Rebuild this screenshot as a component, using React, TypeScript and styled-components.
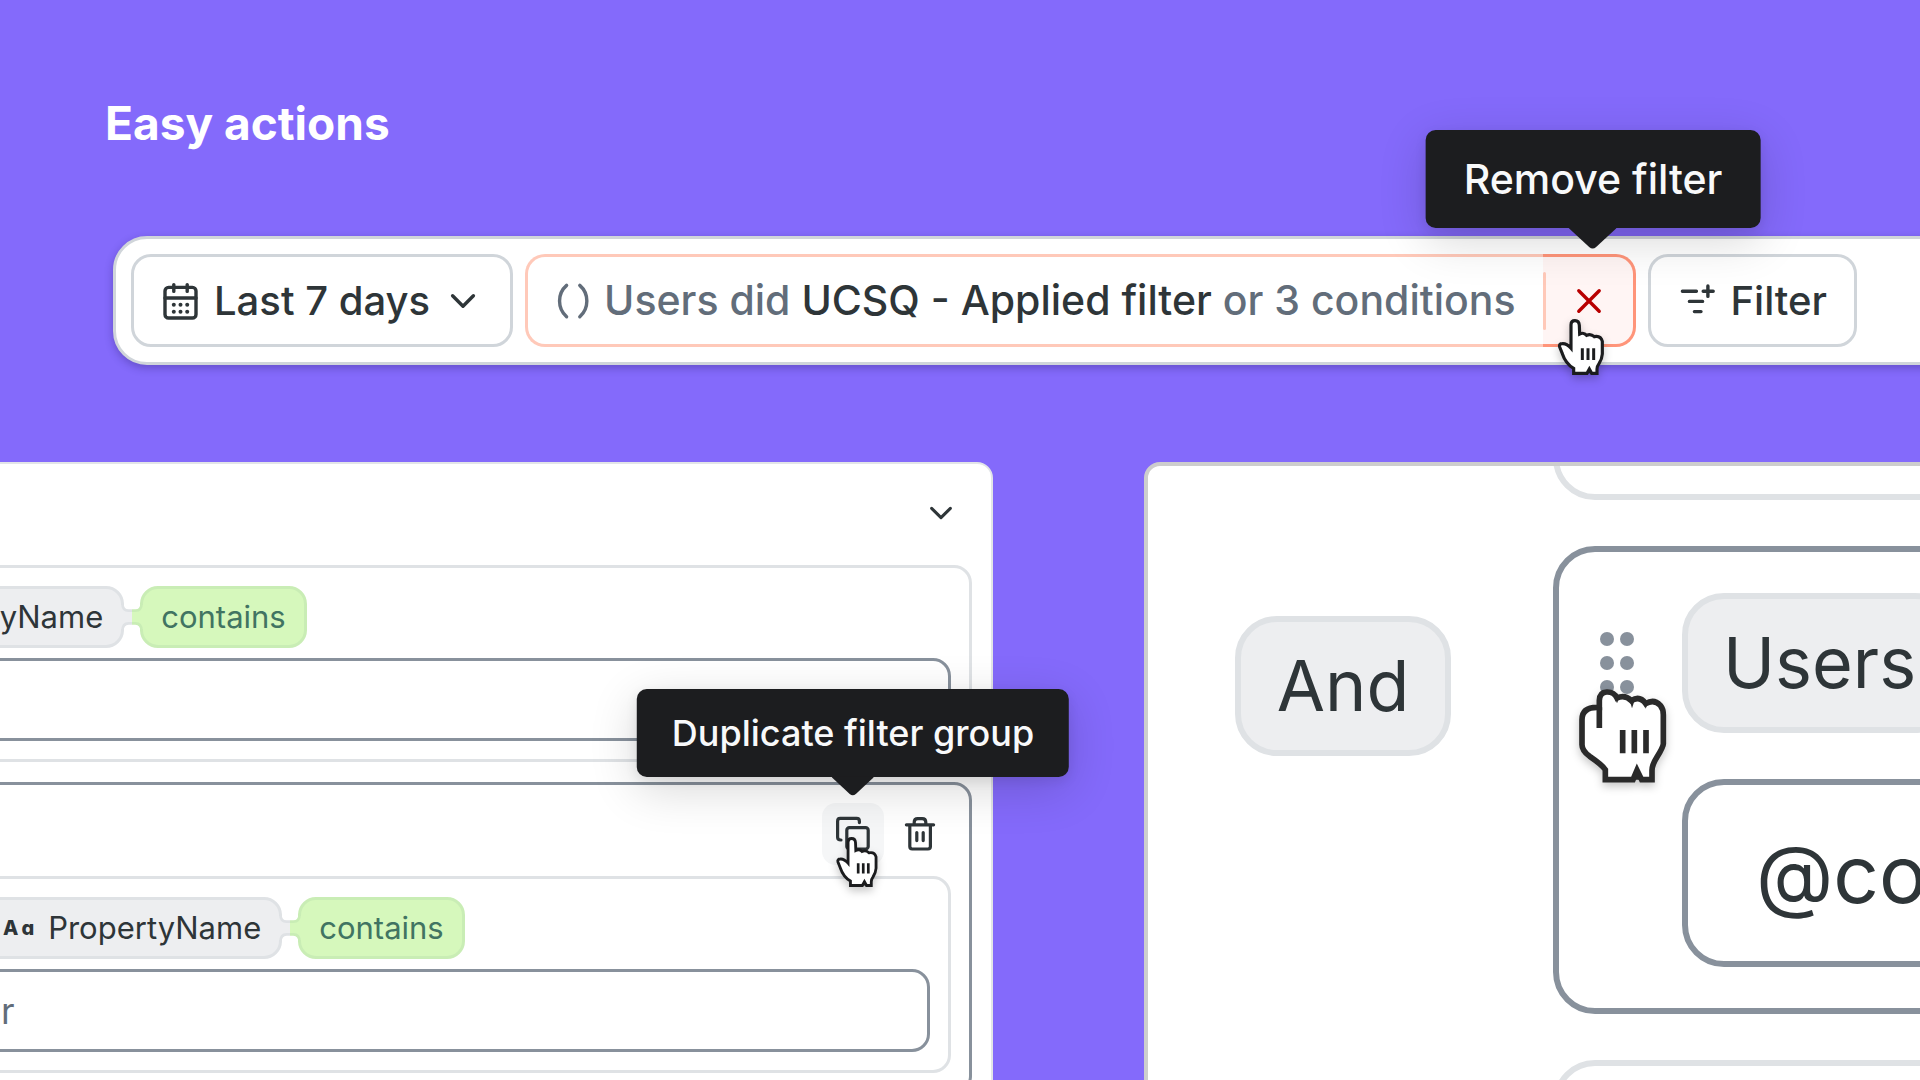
import React from "react";
import styled, { createGlobalStyle } from "styled-components";

const color = {
  page: "#846afb",
  ink: "#2e3538",
  muted: "#626d7a",
  line: "#d0d5da",
  softLine: "#dfe2e5",
  strongLine: "#88919c",
  chip: "#edeef0",
  tooltip: "#1c1d1f",
};

const GlobalStyle = createGlobalStyle`
  *, *::before, *::after { box-sizing: border-box; }
  body {
    margin: 0;
    background: ${color.page};
    color: ${color.ink};
    font-family: Inter, "Liberation Sans", sans-serif;
  }
  button, input { font: inherit; color: inherit; }
  button { cursor: pointer; }
  svg { display: block; flex: none; }
`;

const Page = styled.main`
  display: flex;
  flex-direction: column;
  height: 100vh;
  overflow: hidden;
  padding-top: 94px;
`;

const Title = styled.h1`
  margin: 0 0 84px 105px;
  font-size: 46px;
  line-height: 58px;
  font-weight: 700;
  color: #fff;
`;

/* ---------- toolbar ---------- */

const Toolbar = styled.div`
  display: flex;
  flex: none;
  gap: 12px;
  margin: 0 -40px 97px 113px;
  padding: 15px;
  border: 3px solid ${color.line};
  border-radius: 34px;
  background: #fff;
  box-shadow: 0 3px 8px rgba(30, 20, 90, 0.3);
  font-size: 40px;
  line-height: 47px;
  font-weight: 500;
  white-space: nowrap;
`;

const ToolbarButton = styled.button`
  display: flex;
  align-items: center;
  gap: 13px;
  padding: 20px 27px;
  border: 3px solid ${color.line};
  border-radius: 20px;
  background: transparent;
`;

const FilterPill = styled.div`
  display: flex;
`;

const PillBody = styled.button`
  display: flex;
  align-items: center;
  gap: 10px;
  padding: 20px 27px 20px 26px;
  border: 3px solid #ffc9b9;
  border-right: 0;
  border-radius: 20px 0 0 20px;
  background: transparent;
  color: ${color.muted};
  font-size: 41px;

  strong {
    font-weight: 500;
    color: ${color.ink};
  }
`;

const RemoveSlot = styled.div`
  position: relative;
  display: flex;
`;

const RemoveButton = styled.button`
  display: flex;
  align-items: center;
  padding: 0 24px 0 0;
  border: 3px solid #ff957a;
  border-left: 0;
  border-radius: 0 20px 20px 0;
  background: #fff5f4;
  color: #b80000;

  &::before {
    content: "";
    width: 3px;
    height: 58px;
    margin-right: 23px;
    border-radius: 2px;
    background: #ffc9b9;
  }
`;

/* ---------- overlays ---------- */

const TooltipBox = styled.div<{ $large?: boolean; $shift?: number }>`
  position: absolute;
  z-index: 3;
  left: calc(50% + ${(p) => p.$shift ?? 0}px);
  bottom: calc(100% + 26px);
  transform: translateX(-50%);
  padding: ${(p) => (p.$large ? "25px 38px" : "22px 35px")};
  border-radius: 10px;
  background: ${color.tooltip};
  color: #f8f9fa;
  font-size: ${(p) => (p.$large ? 41 : 36)}px;
  line-height: ${(p) => (p.$large ? 48 : 44)}px;
  font-weight: 500;
  white-space: nowrap;
  box-shadow: 0 12px 48px rgba(0, 0, 0, 0.16), 0 4px 12px rgba(0, 0, 0, 0.08);

  svg {
    position: absolute;
    top: calc(100% - 1px);
    left: 50%;
    transform: translateX(-50%);
  }
`;

const CursorSlot = styled.span<{ $left: number; $top: number }>`
  position: absolute;
  z-index: 4;
  left: ${(p) => p.$left}px;
  top: ${(p) => p.$top}px;
  pointer-events: none;

  svg {
    overflow: visible;
    filter: drop-shadow(0 4px 4px rgba(0, 0, 0, 0.22));
  }
`;

/* ---------- panels ---------- */

const Panels = styled.div`
  display: grid;
  grid-template-columns: minmax(0, 993fr) minmax(0, 776fr);
  gap: 151px;
  flex: 1;
  min-height: 0;
`;

const GroupPanel = styled.section`
  margin-left: -218px;
  height: 760px;
  padding: 0 19px;
  border: 2px solid #e2e5e8;
  border-radius: 16px;
  background: #fff;
`;

const PanelHeader = styled.header`
  display: flex;
  justify-content: flex-end;
  align-items: center;
  height: 101px;
  padding: 0 13px 4px 0;
`;

const Group = styled.div<{ $active?: boolean }>`
  padding: 18px;
  border: 3px solid ${(p) => (p.$active ? color.strongLine : color.softLine)};
  border-radius: 18px;

  & + & {
    margin-top: 20px;
  }
`;

const Nested = styled.div`
  margin-left: 137px;
`;

const GroupActions = styled.div`
  display: flex;
  justify-content: flex-end;
  gap: 5px;
  margin-bottom: 11px;
`;

const ActionSlot = styled.div`
  position: relative;
`;

const IconButton = styled.button<{ $hover?: boolean }>`
  display: grid;
  place-items: center;
  width: 62px;
  height: 62px;
  padding: 0;
  border: 0;
  border-radius: 14px;
  background: ${(p) => (p.$hover ? "#f5f6f7" : "transparent")};
`;

const PlainButton = styled.button`
  display: grid;
  place-items: center;
  padding: 0;
  border: 0;
  background: transparent;
`;

const ChipRow = styled.div`
  display: flex;
  align-items: center;
  margin-bottom: 10px;
`;

const Connector = styled.svg`
  position: relative;
  z-index: 1;
  margin: 0 -4px;
`;

const Chip = styled.button<{ $green?: boolean }>`
  display: flex;
  align-items: center;
  gap: 14px;
  padding: 8px 18px;
  border: 3px solid ${(p) => (p.$green ? "#c9edb5" : color.softLine)};
  border-radius: 18px;
  background: ${(p) => (p.$green ? "#d6f8bc" : color.chip)};
  color: ${(p) => (p.$green ? "#417462" : color.ink)};
  font-size: 31px;
  line-height: 40px;
`;

const TypeMark = styled.span`
  display: flex;
  gap: 3px;
  font-size: 20px;
  line-height: 24px;
  font-weight: 800;
  font-feature-settings: "cv11";
`;

const ValueInput = styled.input`
  display: block;
  width: 100%;
  height: 83px;
  padding: 16px;
  border: 3px solid ${color.strongLine};
  border-radius: 18px;
  outline: 0;
  background: #fff;
  font-size: 36px;
  line-height: 44px;

  &::placeholder {
    color: ${color.muted};
    opacity: 1;
  }
`;

/* ---------- enlarged panel ---------- */

const ZoomPanel = styled.section`
  height: 760px;
  margin-right: -240px;
  overflow: hidden;
  border: 4px solid #cdcdcd;
  border-radius: 16px;
  background: #fff;
`;

const RuleList = styled.div`
  display: grid;
  gap: 46px;
  margin-top: -86px;
  padding-left: 87px;
`;

const Rule = styled.div`
  display: grid;
  grid-template-columns: 216px 1fr;
  column-gap: 102px;
  align-items: start;
`;

const RuleCard = styled.div<{ $active?: boolean }>`
  display: grid;
  grid-template-columns: 34px 1fr;
  grid-column: 2;
  gap: 46px 48px;
  min-height: 120px;
  padding: 41px;
  border: 6px solid ${(p) => (p.$active ? color.strongLine : color.softLine)};
  border-radius: 42px;
`;

const BigChip = styled.button`
  justify-self: start;
  padding: 20px 35px;
  border: 6px solid ${color.softLine};
  border-radius: 42px;
  background: ${color.chip};
  font-size: 70px;
  line-height: 88px;
`;

const JoinChip = styled(BigChip)`
  justify-self: stretch;
  margin-top: 70px;
`;

const DragHandle = styled.div`
  position: relative;
  display: grid;
  align-items: center;
`;

const BigInput = styled.input`
  grid-column: 2;
  width: 100%;
  height: 188px;
  padding: 38px 68px;
  border: 6px solid ${color.strongLine};
  border-radius: 42px;
  outline: 0;
  background: #fff;
  font-size: 80px;
  line-height: 100px;
`;

/* ---------- drawings ---------- */

const stroke = {
  fill: "none",
  stroke: "currentColor",
  strokeLinecap: "round" as const,
  strokeLinejoin: "round" as const,
};

const CalendarIcon = () => (
  <svg width="40" height="40" viewBox="0 0 40 40" aria-hidden="true" {...stroke} strokeWidth="3.4">
    <rect x="4" y="6.4" width="31" height="30.6" rx="3.6" />
    <path d="M4 17H35M12.8 3.6V10.4M26.2 3.6V10.4" />
    <g fill="currentColor" stroke="none">
      {[12.8, 19.5, 26.2].map((x) =>
        [23.8, 30.8].map((y) => <circle key={`${x}-${y}`} cx={x} cy={y} r="2" />),
      )}
    </g>
  </svg>
);

const ChevronIcon = ({ size = 40 }: { size?: number }) => (
  <svg width={size} height={size} viewBox="0 0 40 40" aria-hidden="true" {...stroke} strokeWidth="3.4">
    <path d="M9.6 14.8L20 25.2L30.4 14.8" />
  </svg>
);

const ParensIcon = () => (
  <svg width="40" height="40" viewBox="0 0 40 40" aria-hidden="true" {...stroke} strokeWidth="3.4">
    <path d="M12.6 4.4C3.2 12.6 3.2 27.4 12.6 35.8M25.8 4.4C35.2 12.6 35.2 27.4 25.8 35.8" />
  </svg>
);

const CloseIcon = () => (
  <svg width="40" height="40" viewBox="0 0 40 40" aria-hidden="true" {...stroke} strokeWidth="3.4">
    <path d="M9.8 9.8L30.2 30.2M30.2 9.8L9.8 30.2" />
  </svg>
);

const AddFilterIcon = () => (
  <svg width="40" height="40" viewBox="0 0 40 40" aria-hidden="true" {...stroke} strokeWidth="3.4">
    <path d="M4.4 10.2H18.4M25.2 10.2H35.2M29.9 5V15.4M11.4 20.4H24.6M16.4 30.6H23" />
  </svg>
);

const CopyIcon = () => (
  <svg width="40" height="40" viewBox="0 0 40 40" aria-hidden="true" {...stroke} strokeWidth="3.2">
    <path d="M26.4 8.6V7.2Q26.4 4.4 23.6 4.4H7.2Q4.6 4.4 4.6 7.2V23.2Q4.6 26 8 26" />
    <rect x="13.8" y="13.6" width="21.4" height="21.4" rx="2.6" />
  </svg>
);

const TrashIcon = () => (
  <svg width="40" height="40" viewBox="0 0 40 40" aria-hidden="true" {...stroke} strokeWidth="3.2">
    <path d="M6.4 10.8H33.6M9.8 10.8V32.6Q9.8 35 12.2 35H28Q30.4 35 30.4 32.6V10.8M14.2 10.8V8.2Q14.2 4.6 17.8 4.6H22.2Q25.8 4.6 25.8 8.2V10.8" />
    <path d="M16.8 18.6V26.6M23.2 18.6V26.6" />
  </svg>
);

const TooltipArrow = ({ large }: { large?: boolean }) => (
  <svg width={large ? 48 : 42} height={large ? 22 : 20} viewBox="0 0 48 22" aria-hidden="true">
    <path d="M0 0H48V1L27.5 20Q24 23 20.5 20L0 1Z" fill={color.tooltip} />
  </svg>
);

const PointerCursor = ({ small }: { small?: boolean }) => (
  <svg width={small ? 42 : 46} height={small ? 50 : 56} viewBox="473 628 138 168" aria-hidden="true">
    <path
      d="M512 716V646Q512 633 524 633Q536 633 537 647L538 673Q550 667 559 677Q571 671 582 681Q601 677 606 695V733Q605 748 596 762Q590 770 590 778V791H574L567 778L560 791H520V776Q496 762 486 732L478 712Q475 702 486 702Q499 701 512 716Z"
      fill="#fff"
      stroke="#1b1c1e"
      strokeWidth="9.5"
    />
    <path d="M546 716V751M563 716V751M580 716V751" stroke="#1b1c1e" strokeWidth="9" />
    <path d="M560 791L567 774L574 791Z" fill="#1b1c1e" />
  </svg>
);

const GrabCursor = () => (
  <svg width="88" height="94" viewBox="118 718 264 282" aria-hidden="true">
    <path
      d="M179 773V752Q180 728 201 727Q223 726 232 745Q256 734 275 753Q300 737 318 762Q343 747 362 767Q371 778 371 795V882Q371 891 352 922Q337 946 337 962V990H306L292 962L280 990H197V960Q188 946 150 920Q127 903 127 885V810Q127 773 172 773Z"
      fill="#fff"
      stroke="#2a2a2a"
      strokeWidth="17"
    />
    <path d="M179 773V835M249 841V911M284 841V911M319 841V911" stroke="#2a2a2a" strokeWidth="17" />
    <path d="M226 745L232 761L240 742ZM270 752L277 776L285 752ZM312 760L318 777L326 758ZM275 990L292 948L310 990Z" fill="#2a2a2a" />
  </svg>
);

const HandleDots = () => (
  <svg width="34" height="62" viewBox="0 0 34 62" fill={color.strongLine} aria-hidden="true">
    {[7, 27].map((x) => [7, 31, 55].map((y) => <circle key={`${x}-${y}`} cx={x} cy={y} r="7" />))}
  </svg>
);

const ChipConnector = () => (
  <Connector width="24" height="32" viewBox="364 453 72 96" aria-hidden="true">
    <path d="M364 465H372Q374 482 392 482H400V520H392Q374 520 372 537H364Z" fill={color.chip} />
    <path d="M436 465H428Q426 482 408 482H400V520H408Q426 520 428 537H436Z" fill="#d6f8bc" />
    <g fill="none" strokeWidth="8">
      <path d="M371 458Q371 482 390 482H400M371 544Q371 520 390 520H400" stroke={color.softLine} />
      <path d="M429 458Q429 482 410 482H400M429 544Q429 520 410 520H400" stroke="#c9edb5" />
    </g>
  </Connector>
);

const PropertyChips = () => (
  <ChipRow>
    <Chip type="button">
      <TypeMark>
        <span>A</span>
        <span>a</span>
      </TypeMark>
      PropertyName
    </Chip>
    <ChipConnector />
    <Chip type="button" $green>
      contains
    </Chip>
  </ChipRow>
);

export default function App() {
  return (
    <>
      <GlobalStyle />
      <Page>
        <Title>Easy actions</Title>

        <Toolbar>
          <ToolbarButton type="button">
            <CalendarIcon />
            Last 7 days
            <ChevronIcon />
          </ToolbarButton>
          <FilterPill>
            <PillBody type="button">
              <ParensIcon />
              <span>
                Users did <strong>UCSQ - Applied filter</strong> or 3 conditions
              </span>
            </PillBody>
            <RemoveSlot>
              <RemoveButton type="button" aria-label="Remove filter">
                <CloseIcon />
              </RemoveButton>
              <TooltipBox role="tooltip" $large $shift={4}>
                Remove filter
                <TooltipArrow large />
              </TooltipBox>
              <CursorSlot $left={15} $top={65}>
                <PointerCursor />
              </CursorSlot>
            </RemoveSlot>
          </FilterPill>
          <ToolbarButton type="button">
            <AddFilterIcon />
            Filter
          </ToolbarButton>
        </Toolbar>

        <Panels>
          <GroupPanel>
            <PanelHeader>
              <PlainButton type="button" aria-label="Collapse">
                <ChevronIcon size={36} />
              </PlainButton>
            </PanelHeader>
            <Group>
              <PropertyChips />
              <ValueInput aria-label="Value" />
            </Group>
            <Group $active>
              <GroupActions>
                <ActionSlot>
                  <IconButton type="button" aria-label="Duplicate filter group" $hover>
                    <CopyIcon />
                  </IconButton>
                  <TooltipBox role="tooltip">
                    Duplicate filter group
                    <TooltipArrow />
                  </TooltipBox>
                  <CursorSlot $left={14} $top={34}>
                    <PointerCursor small />
                  </CursorSlot>
                </ActionSlot>
                <IconButton type="button" aria-label="Delete filter group">
                  <TrashIcon />
                </IconButton>
              </GroupActions>
              <Nested>
                <Group>
                  <PropertyChips />
                  <ValueInput aria-label="Value" placeholder="r" />
                </Group>
              </Nested>
            </Group>
          </GroupPanel>

          <ZoomPanel>
            <RuleList>
              <Rule>
                <RuleCard />
              </Rule>
              <Rule>
                <JoinChip type="button">And</JoinChip>
                <RuleCard $active>
                  <DragHandle>
                    <HandleDots />
                    <CursorSlot $left={-21} $top={96}>
                      <GrabCursor />
                    </CursorSlot>
                  </DragHandle>
                  <BigChip type="button">Users</BigChip>
                  <BigInput aria-label="Value" defaultValue="@co" />
                </RuleCard>
              </Rule>
              <Rule>
                <RuleCard />
              </Rule>
            </RuleList>
          </ZoomPanel>
        </Panels>
      </Page>
    </>
  );
}
